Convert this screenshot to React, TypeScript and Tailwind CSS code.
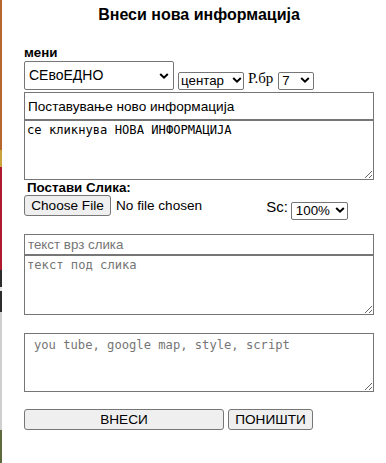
import React from "react";

const Chevron = ({ x }: { x: string }) => (
  <svg
    className={`pointer-events-none absolute top-1/2 -translate-y-1/2 ${x}`}
    width="10"
    height="7"
    viewBox="0 0 10 7"
  >
    <path d="M1.2 1.5 L5 5.2 L8.8 1.5" fill="none" stroke="#000" strokeWidth="2" />
  </svg>
);

export default function App() {
  const arial = { fontFamily: '"Liberation Sans", Arial, sans-serif' } as const;
  return (
    <div
      className="flex w-[386px] h-[463px] bg-white text-black overflow-hidden"
      style={arial}
    >
      {/* decorative background slice on left edge */}
      <div className="flex flex-col w-[2px] shrink-0">
        <div className="h-[150px] bg-[#b5672e]" />
        <div className="h-[17px] bg-[#c9a43c]" />
        <div className="h-[103px] bg-[#b01a30]" />
        <div className="h-[17px] bg-[#2c2c2c]" />
        <div className="h-[4px] bg-[#e8e8e8]" />
        <div className="h-[21px] bg-[#2c2c2c]" />
        <div className="h-[118px] bg-[#cfcfcf]" />
        <div className="h-[33px] bg-[#5d6b3c]" />
      </div>

      <div className="pl-[22px] w-[372px] flex flex-col">
        <div className="w-[350px] pt-[5px] h-[45px] text-center text-[16px] leading-[20px] font-bold">
          Внеси нова информација
        </div>

        <div className="text-[13.33px] leading-[15px] font-bold">мени</div>

        <div className="flex items-start mt-[1px] h-[29px]">
          <div className="relative">
            <select className="appearance-none w-[150px] h-[29px] border border-[#767676] rounded-[2px] bg-white pl-[4px] text-[14px] outline-none">
              <option>СЕвоЕДНО</option>
            </select>
            <Chevron x="right-[5px]" />
          </div>
          <div className="relative ml-[4px] mt-[7px]">
            <select className="appearance-none w-[66px] h-[18px] border border-[#767676] rounded-[2px] bg-white pl-[2px] text-[13.33px] leading-[16px] outline-none">
              <option>центар</option>
            </select>
            <Chevron x="right-[2px]" />
          </div>
          <span
            className="ml-[4px] mt-[8px] text-[15px] leading-[18px]"
            style={{ fontFamily: '"Liberation Serif", "Times New Roman", serif' }}
          >
            Р.бр
          </span>
          <div className="relative ml-[5px] mt-[7px]">
            <select className="appearance-none w-[36px] h-[18px] border border-[#767676] rounded-[2px] bg-white pl-[3px] text-[13.33px] leading-[16px] outline-none">
              <option>7</option>
            </select>
            <Chevron x="right-[4px]" />
          </div>
        </div>

        <input
          className="mt-[2px] w-[350px] h-[28px] border border-[#767676] px-[3px] text-[13.6px] outline-none"
          defaultValue="Поставување ново информација"
        />
        <textarea
          className="block w-[350px] h-[60px] border border-[#767676] px-[2px] py-[2px] text-[12.15px] leading-[15px] outline-none"
          style={{ fontFamily: '"DejaVu Sans Mono", monospace' }}
          defaultValue="се кликнува НОВА ИНФОРМАЦИЈА"
        />

        <div className="text-[13.33px] leading-[15px] font-bold pl-[3px]">Постави Слика:</div>

        <div className="flex items-start h-[21px]">
          <button className="w-[87px] h-[21px] border border-[#767676] rounded-[3px] bg-[#efefef] text-[13.6px] leading-[17px]">
            Choose File
          </button>
          <span className="ml-[5px] text-[13.6px] leading-[21px]">No file chosen</span>
          <span className="ml-[64px] mt-[3px] text-[15px] leading-[18px]">Sc:</span>
          <div className="relative ml-[3px] mt-[3px]">
            <select className="appearance-none w-[57px] h-[18px] border border-[#767676] rounded-[2px] bg-white pl-[4px] text-[13.33px] leading-[16px] outline-none">
              <option>100%</option>
            </select>
            <Chevron x="right-[3px]" />
          </div>
        </div>

        <input
          className="mt-[18px] w-[350px] h-[21px] border border-[#767676] px-[3px] text-[13.33px] outline-none placeholder:text-[#757575]"
          placeholder="текст врз слика"
        />
        <textarea
          className="block w-[350px] h-[60px] border border-[#767676] px-[2px] py-[2px] text-[12.15px] leading-[15px] outline-none placeholder:text-[#757575]"
          style={{ fontFamily: '"DejaVu Sans Mono", monospace' }}
          placeholder="текст под слика"
        />

        <textarea
          className="block mt-[18px] w-[350px] h-[59px] border border-[#767676] pl-[9px] pr-[2px] pt-[4px] text-[12.15px] leading-[15px] outline-none placeholder:text-[#757575]"
          style={{ fontFamily: '"DejaVu Sans Mono", monospace' }}
          placeholder="you tube, google map, style, script"
        />

        <div className="flex mt-[17px]">
          <button className="w-[200px] h-[21px] border border-[#767676] rounded-[3px] bg-[#efefef] text-[13.6px] leading-[17px]">
            ВНЕСИ
          </button>
          <button className="ml-[4px] w-[85px] h-[21px] border border-[#767676] rounded-[3px] bg-[#efefef] text-[13.6px] leading-[17px]">
            ПОНИШТИ
          </button>
        </div>
      </div>
    </div>
  );
}
